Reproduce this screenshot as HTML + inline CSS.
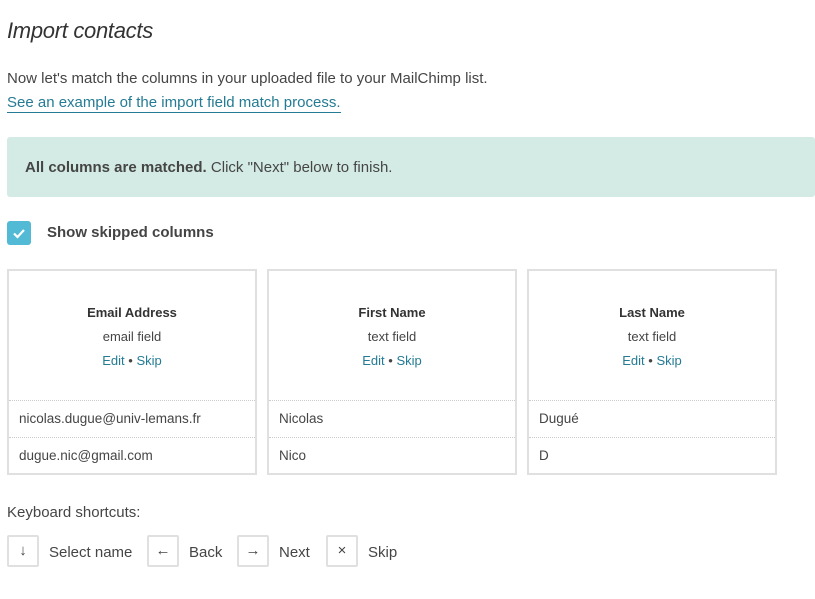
<!DOCTYPE html>
<html><head><meta charset="utf-8"><style>
*{margin:0;padding:0;box-sizing:border-box}
body{width:815px;height:599px;overflow:hidden;background:#fff;font-family:"Liberation Sans",sans-serif;color:#454545;position:relative}
.a{position:absolute;white-space:nowrap}
h1{position:absolute;left:7px;top:18px;font-size:22px;font-style:italic;font-weight:normal;color:#333;letter-spacing:-0.3px}
.t{font-size:15px}
.link{color:#247b93;border-bottom:1px solid #247b93;padding-bottom:1px}
.note{position:absolute;left:7px;top:137px;width:808px;height:60px;background:#d3ebe4;border-radius:3px;font-size:15px;padding:22px 0 0 18px}
.cb{position:absolute;left:7px;top:221px;width:24px;height:24px;background:#52bad5;border-radius:3px}
.card{position:absolute;top:269px;width:250px;height:206px;border:2px solid #e0e0e0}
.hd{height:129px;text-align:center;font-size:13px;padding-top:30px;line-height:24px}
.hd b{color:#333}
.hd .l{color:#247b93}
.row{height:37px;border-top:1px dotted #ccc;font-size:13.5px;padding:10px 0 0 10px}
.key{position:absolute;top:535px;width:32px;height:32px;border:2px solid #e0e0e0;border-radius:2px;text-align:center;line-height:28px;font-size:15px}
</style></head><body>
<h1>Import contacts</h1>
<div class="a t" style="left:7px;top:70px">Now let's match the columns in your uploaded file to your MailChimp list.</div>
<div class="a t" style="left:7px;top:94px"><span class="link">See an example of the import field match process.</span></div>
<div class="note"><b>All columns are matched.</b> Click "Next" below to finish.</div>
<div class="cb"><svg width="24" height="24"><path d="M7 12.5l3.5 3.5 6.5-7" stroke="#fff" stroke-width="2.2" fill="none"/></svg></div>
<div class="a t" style="left:47px;top:224px;font-weight:bold;color:#444">Show skipped columns</div>
<div class="card" style="left:7px"><div class="hd"><b>Email Address</b><br>email field<br><span class="l">Edit</span> • <span class="l">Skip</span></div><div class="row">nicolas.dugue@univ-lemans.fr</div><div class="row">dugue.nic@gmail.com</div></div>
<div class="card" style="left:267px"><div class="hd"><b>First Name</b><br>text field<br><span class="l">Edit</span> • <span class="l">Skip</span></div><div class="row">Nicolas</div><div class="row">Nico</div></div>
<div class="card" style="left:527px"><div class="hd"><b>Last Name</b><br>text field<br><span class="l">Edit</span> • <span class="l">Skip</span></div><div class="row">Dugué</div><div class="row">D</div></div>
<div class="a t" style="left:7px;top:504px">Keyboard shortcuts:</div>
<div class="key" style="left:7px">↓</div><div class="a t" style="left:49px;top:544px">Select name</div>
<div class="key" style="left:147px">←</div><div class="a t" style="left:189px;top:544px">Back</div>
<div class="key" style="left:237px">→</div><div class="a t" style="left:279px;top:544px">Next</div>
<div class="key" style="left:326px">×</div><div class="a t" style="left:368px;top:544px">Skip</div>
</body></html>
